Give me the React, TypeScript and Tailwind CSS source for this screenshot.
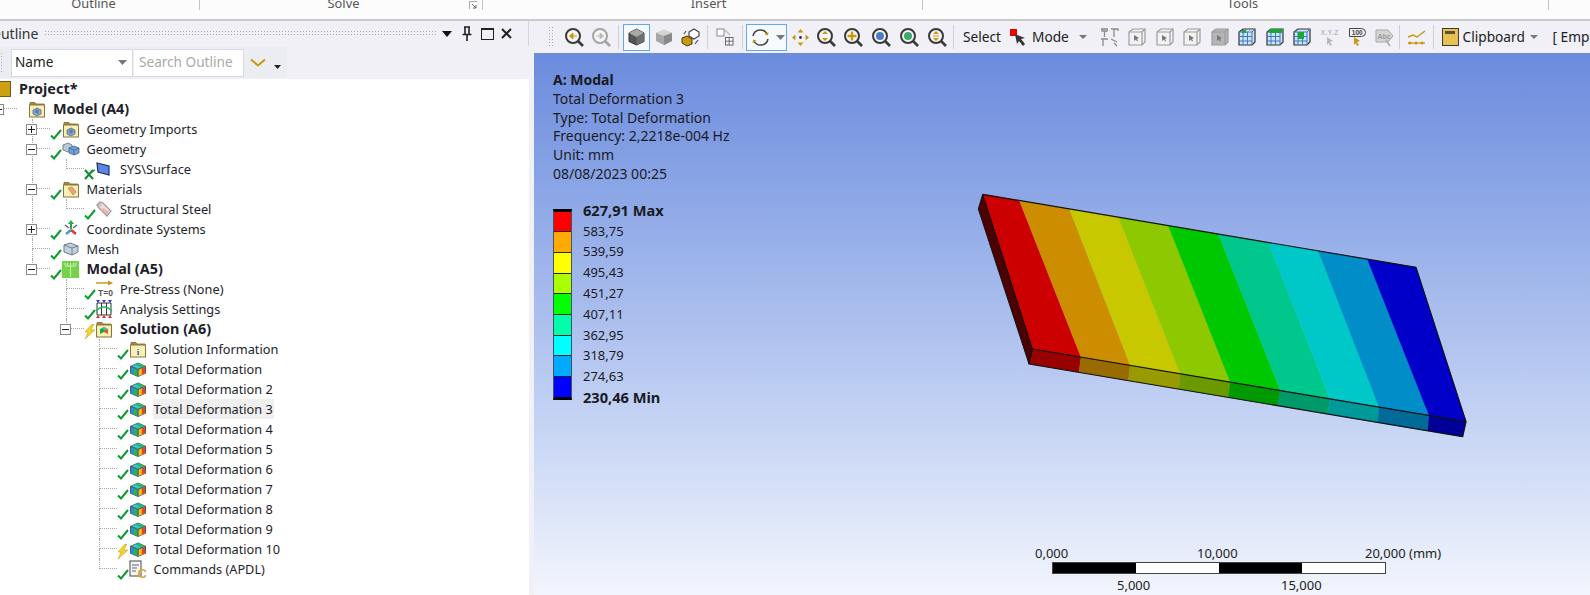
import React from "react";

type Check = "ok" | "bolt" | "x" | null;

type TreeRow = {
  guides: boolean[];
  conn: "T" | "L";
  exp?: "+" | "-";
  check: Check;
  icon: React.ReactNode;
  label: string;
  bold?: boolean;
  selected?: boolean;
};

function Folder({ children }: { children?: React.ReactNode }) {
  return (
    <svg width="18" height="18" viewBox="0 0 18 18">
      <path d="M2 4V2.5h5l1 1.5h8v1.5H2z" fill="#a98a3c" stroke="#7d6a30" strokeWidth="0.8" />
      <rect x="1.5" y="5" width="15" height="12" fill="#fbf0b4" stroke="#85763e" strokeWidth="1" />
      {children}
    </svg>
  );
}

function Camera() {
  return (
    <>
      <path d="M5 10l4-2 4 2v4l-4 2-4-2z" fill="#8fa6bf" stroke="#5b6d80" strokeWidth="0.8" />
      <circle cx="9" cy="11.5" r="2" fill="#4f82c4" />
    </>
  );
}

function MaterialsIcon() {
  return (
    <Folder>
      <path d="M6 8l4-1 4 5-3 3z" fill="#e0a777" stroke="#b57f50" strokeWidth="0.7" />
    </Folder>
  );
}

function SolutionFolder() {
  return (
    <Folder>
      <path d="M5 9l4-2v5l-4 2z" fill="#1faa3c" />
      <path d="M9 7l4 2v5l-4-2z" fill="#e2562b" />
      <path d="M7 8.5l3-1 3 2-3 1z" fill="#38bcd8" />
    </Folder>
  );
}

function InfoFolder() {
  return (
    <Folder>
      <text x="9" y="15" textAnchor="middle" fontSize="9" fontWeight="700" fill="#2560c8" fontFamily="Liberation Serif, serif">
        i
      </text>
    </Folder>
  );
}

function GeometryIcon() {
  return (
    <svg width="18" height="14" viewBox="0 0 18 14">
      <path d="M1 3l5-2 4 2v5l-4 2-5-2z" fill="#b8c8dc" stroke="#6d7a88" strokeWidth="0.9" />
      <path d="M7 6l5-2 5 2v5l-5 2-5-2z" fill="#6fa0dc" stroke="#566f8c" strokeWidth="0.9" />
      <path d="M7 6l5 2 5-2M12 8v5" fill="none" stroke="#3f5f88" strokeWidth="0.7" />
    </svg>
  );
}

function SurfaceIcon() {
  return (
    <svg width="16" height="14" viewBox="0 0 16 14">
      <path d="M2 1l12 3v9L3 10z" fill="#5b86e8" stroke="#1f2f5f" strokeWidth="1.2" />
    </svg>
  );
}

function TagIcon() {
  return (
    <svg width="18" height="18" viewBox="0 0 18 18">
      <path d="M2 5l3-3 3 1 8 8-4 5-8-8z" fill="#f0dcdc" stroke="#9a9a9a" strokeWidth="1.2" />
      <path d="M8 8l6 4-2 3-6-5z" fill="#e8b4b4" />
      <circle cx="5" cy="5" r="1.2" fill="#fff" stroke="#888" strokeWidth="0.6" />
    </svg>
  );
}

function CoordIcon() {
  return (
    <svg width="18" height="18" viewBox="0 0 18 18">
      <path d="M9 9V3" stroke="#18b040" strokeWidth="2" />
      <path d="M9 0l3 4H6z" fill="#18b040" />
      <path d="M9 10L4 14" stroke="#4a90e0" strokeWidth="2.4" />
      <path d="M9 10l5 4" stroke="#e03030" strokeWidth="2.4" />
      <path d="M3 5l4 3M15 5l-4 3" stroke="#555" strokeWidth="1.2" />
    </svg>
  );
}

function MeshIcon() {
  return (
    <svg width="18" height="14" viewBox="0 0 18 14">
      <path d="M2 3l6-2 8 3v6l-6 3-8-3z" fill="#c2d0e0" stroke="#6d7a88" strokeWidth="1" />
      <path d="M2 3l8 3 6-2M10 6v7" fill="none" stroke="#6d7a88" strokeWidth="0.9" />
    </svg>
  );
}

function ModalIcon() {
  return (
    <svg width="17" height="17" viewBox="0 0 17 17">
      <rect width="17" height="17" fill="#74d34a" />
      <path d="M8.5 16V5M3 5h11M3 2v2M5.5 2v2M8.5 2v2M11.5 2v2M14 2v2" stroke="#d8f6c8" strokeWidth="1" fill="none" />
    </svg>
  );
}

function PreStressIcon() {
  return (
    <svg width="18" height="18" viewBox="0 0 18 18">
      <path d="M1 3h13" stroke="#c8960c" strokeWidth="1.4" />
      <path d="M13 0.5l5 2.5-5 2.5z" fill="#c8960c" />
      <text x="18" y="16" textAnchor="end" fontSize="8.5" fontWeight="700" fill="#555" fontFamily="Liberation Sans, sans-serif">
        T=0
      </text>
    </svg>
  );
}

function AnalysisIcon() {
  return (
    <svg width="18" height="18" viewBox="0 0 18 18">
      <path d="M2 3h14v12H2zM6.5 3v12M11.5 3v12" fill="none" stroke="#333" strokeWidth="1" />
      <path d="M1 11q8-8 16 0" fill="none" stroke="#22b85a" strokeWidth="1.5" />
      <path d="M1 0h4L3 3zM7 0h4L9 3zM13 0h4l-2 3z" fill="#2a3fe0" />
      <path d="M3 15l2 3H1zM9 15l2 3H7zM15 15l2 3h-4z" fill="#e03030" />
    </svg>
  );
}

function TotalDefIcon() {
  return (
    <svg width="18" height="15" viewBox="0 0 18 15">
      <path d="M1 4l8-3.5L17 4v7.5L9 15l-8-3.5z" fill="#5a5a5a" />
      <path d="M2 5l6.3 2.7V14L2 11.2z" fill="#2290e0" />
      <path d="M5 6.3l3.3 1.4V14L5 12.5z" fill="#25b848" />
      <path d="M9.7 7.7L16 5v6.2L9.7 14z" fill="#ecc420" />
      <path d="M12.8 6.4L16 5v6.2l-3.2 1.4z" fill="#e4481f" />
      <path d="M2.5 4L9 1.2 15.5 4 9 6.8z" fill="#2fc8dc" />
      <path d="M9 1.2L15.5 4 12 5.5 6 2.5z" fill="#25b868" />
    </svg>
  );
}

function CommandsIcon() {
  return (
    <svg width="18" height="18" viewBox="0 0 18 18">
      <rect x="1" y="1" width="11" height="15" fill="#f4f4f4" stroke="#666" strokeWidth="1.2" />
      <path d="M3 5h7M3 8h5M3 11h4" stroke="#666" strokeWidth="1" />
      <text x="18" y="18" textAnchor="end" fontSize="13" fontWeight="700" fill="#d9a63a" fontFamily="Liberation Sans, sans-serif">
        C
      </text>
    </svg>
  );
}

function Status({ kind }: { kind: Check }) {
  if (kind === "ok") {
    return (
      <svg width="12" height="11" viewBox="0 0 12 11" className="mt-[10px]">
        <path d="M1 6.5l3 3L11 1" fill="none" stroke="#0d9a2e" strokeWidth="2" />
      </svg>
    );
  }
  if (kind === "bolt") {
    return (
      <svg width="12" height="15" viewBox="0 0 12 15" className="mt-[5px]">
        <path d="M8 0L1 8h3l-3 7 10-9H7l3-6z" fill="#f5d327" stroke="#b39a20" strokeWidth="0.5" />
      </svg>
    );
  }
  if (kind === "x") {
    return (
      <svg width="12" height="11" viewBox="0 0 12 11" className="mt-[10px]">
        <path d="M1 1l8 9M9 1l-8 9" fill="none" stroke="#0d8a2e" strokeWidth="2" />
        <path d="M7 4l2-2 2-1" fill="none" stroke="#0d9a2e" strokeWidth="1.4" />
      </svg>
    );
  }
  return null;
}

function Expander({ sign }: { sign: "+" | "-" }) {
  return (
    <div className="absolute left-[-6px] top-[5px] flex h-[11px] w-[11px] items-center justify-center border border-[#8a8a8a] bg-white">
      <div className="relative h-px w-[7px] bg-[#222]">
        {sign === "+" && <div className="absolute left-[3px] top-[-3px] h-[7px] w-px bg-[#222]" />}
      </div>
    </div>
  );
}

const line = "border-l border-dotted border-[#a8a8a8]";

function Row({ row }: { row: TreeRow }) {
  return (
    <div className="-ml-[1.5px] flex h-5">
      {row.guides.map((on, i) => (
        <div key={i} className={`h-5 w-[33.5px] shrink-0 ${on ? line : ""}`} />
      ))}
      <div className="relative h-5 w-[18px] shrink-0">
        <div className={`h-[10px] ${line} border-b`} />
        {row.conn === "T" && <div className={`h-[10px] ${line}`} />}
        {row.exp && <Expander sign={row.exp} />}
      </div>
      <div className="h-5 w-[11.5px] shrink-0">
        <Status kind={row.check} />
      </div>
      <div className="flex h-5 w-[24px] shrink-0 items-center">{row.icon}</div>
      <div
        className={`h-5 px-px leading-5 ${row.bold ? "text-[14.4px] font-bold" : ""} ${row.selected ? "bg-[#efefef]" : ""}`}
      >
        {row.label}
      </div>
    </div>
  );
}

const V = true;
const _ = false;

const rows: TreeRow[] = [
  { guides: [], conn: "T", exp: "-", check: null, icon: <Folder><Camera /></Folder>, label: "Model (A4)", bold: true },
  { guides: [_], conn: "T", exp: "+", check: "ok", icon: <Folder><Camera /></Folder>, label: "Geometry Imports" },
  { guides: [_], conn: "T", exp: "-", check: "ok", icon: <GeometryIcon />, label: "Geometry" },
  { guides: [_, V], conn: "L", check: "x", icon: <SurfaceIcon />, label: "SYS\\Surface" },
  { guides: [_], conn: "T", exp: "-", check: "ok", icon: <MaterialsIcon />, label: "Materials" },
  { guides: [_, V], conn: "L", check: "ok", icon: <TagIcon />, label: "Structural Steel" },
  { guides: [_], conn: "T", exp: "+", check: "ok", icon: <CoordIcon />, label: "Coordinate Systems" },
  { guides: [_], conn: "T", check: "ok", icon: <MeshIcon />, label: "Mesh" },
  { guides: [_], conn: "L", exp: "-", check: "ok", icon: <ModalIcon />, label: "Modal (A5)", bold: true },
  { guides: [_, _], conn: "T", check: "ok", icon: <PreStressIcon />, label: "Pre-Stress (None)" },
  { guides: [_, _], conn: "T", check: "ok", icon: <AnalysisIcon />, label: "Analysis Settings" },
  { guides: [_, _], conn: "L", exp: "-", check: "bolt", icon: <SolutionFolder />, label: "Solution (A6)", bold: true },
  { guides: [_, _, _], conn: "T", check: "ok", icon: <InfoFolder />, label: "Solution Information" },
  { guides: [_, _, _], conn: "T", check: "ok", icon: <TotalDefIcon />, label: "Total Deformation" },
  { guides: [_, _, _], conn: "T", check: "ok", icon: <TotalDefIcon />, label: "Total Deformation 2" },
  { guides: [_, _, _], conn: "T", check: "ok", icon: <TotalDefIcon />, label: "Total Deformation 3", selected: true },
  { guides: [_, _, _], conn: "T", check: "ok", icon: <TotalDefIcon />, label: "Total Deformation 4" },
  { guides: [_, _, _], conn: "T", check: "ok", icon: <TotalDefIcon />, label: "Total Deformation 5" },
  { guides: [_, _, _], conn: "T", check: "ok", icon: <TotalDefIcon />, label: "Total Deformation 6" },
  { guides: [_, _, _], conn: "T", check: "ok", icon: <TotalDefIcon />, label: "Total Deformation 7" },
  { guides: [_, _, _], conn: "T", check: "ok", icon: <TotalDefIcon />, label: "Total Deformation 8" },
  { guides: [_, _, _], conn: "T", check: "ok", icon: <TotalDefIcon />, label: "Total Deformation 9" },
  { guides: [_, _, _], conn: "T", check: "bolt", icon: <TotalDefIcon />, label: "Total Deformation 10" },
  { guides: [_, _, _], conn: "L", check: "ok", icon: <CommandsIcon />, label: "Commands (APDL)" },
];

function Ribbon() {
  const cell = "h-[10px] border-r border-[#c4c4c4] text-center";
  return (
    <div className="flex h-[19px] shrink-0 overflow-hidden border-b border-[#fafafa] bg-[#fcfcfc] text-[12.8px] leading-[14px] text-[#555]">
      <div className={`${cell} w-[200px] pr-[12px]`}>
        <div className="-mt-[4px]">Outline</div>
      </div>
      <div className={`${cell} relative w-[283px] pl-[5px]`}>
        <div className="-mt-[4px]">Solve</div>
        <svg width="9" height="9" viewBox="0 0 9 9" className="absolute right-[4px] top-[1px]">
          <path d="M0.5 8V0.5H8" fill="none" stroke="#aaa" />
          <path d="M3 3l4 4M7 4v3H4" fill="none" stroke="#666" />
        </svg>
      </div>
      <div className={`${cell} w-[440px] pl-[12px]`}>
        <div className="-mt-[4px]">Insert</div>
      </div>
      <div className={`${cell} w-[626px] pl-[14px]`}>
        <div className="-mt-[4px]">Tools</div>
      </div>
    </div>
  );
}

function OutlineHeader() {
  return (
    <div className="flex h-[25px] w-[529px] shrink-0 items-center border-r border-[#d4d4dc] text-[14px] text-[#333]">
      <div className="-ml-[10px] w-[54px] shrink-0">Outline</div>
      <div className="h-[7px] w-[393px] shrink-0 bg-[radial-gradient(#a6a6b0_0.7px,transparent_0.9px)] bg-[length:3px_3px]" />
      <svg width="10" height="6" viewBox="0 0 10 6" className="ml-[5px] shrink-0">
        <path d="M0 0h10L5 6z" fill="#111" />
      </svg>
      <svg width="12" height="15" viewBox="0 0 12 15" className="ml-[9px] shrink-0">
        <path d="M3 1h6M4 1v7M8 1v7M1.5 8.5h9M6 9v6" fill="none" stroke="#222" strokeWidth="1.6" />
      </svg>
      <div className="ml-[8px] h-[12px] w-[13px] shrink-0 border-[1.5px] border-t-[2.5px] border-[#222]" />
      <svg width="11" height="11" viewBox="0 0 11 11" className="ml-[7px] shrink-0">
        <path d="M1 1l9 9M10 1l-9 9" stroke="#222" strokeWidth="2" />
      </svg>
    </div>
  );
}

function OutlineFilter() {
  return (
    <div className="flex h-[33px] w-[529px] shrink-0 items-center text-[13.6px]">
      <div className="flex h-[31px] w-[287px] items-center bg-[#ecedf3]">
        <div className="h-[22px] w-[3px] bg-[radial-gradient(#b0b0b8_0.7px,transparent_0.9px)] bg-[length:3px_3px]" />
        <div className="ml-[8px] flex h-[28px] w-[122px] items-center justify-between border border-[#d8d8e6] bg-white pl-[3px] pr-[5px] text-[#222]">
          Name
          <svg width="9" height="5" viewBox="0 0 9 5">
            <path d="M0 0h9L4.5 5z" fill="#777" />
          </svg>
        </div>
        <div className="ml-px flex h-[28px] w-[110px] items-center border border-l-0 border-[#d8d8e6] bg-white pl-[5px] whitespace-nowrap text-[#a9a9a9]">
          Search Outline
        </div>
        <svg width="16" height="10" viewBox="0 0 16 10" className="ml-[6px]">
          <path d="M1 1.5l7 6 7-6" fill="none" stroke="#c8980f" strokeWidth="2" />
        </svg>
        <svg width="7" height="4" viewBox="0 0 7 4" className="ml-[8px] mt-[9px]">
          <path d="M0 0h7L3.5 4z" fill="#222" />
        </svg>
      </div>
    </div>
  );
}

function OutlineTree() {
  return (
    <div className="min-h-0 w-[529px] flex-1 overflow-hidden bg-white text-[12.75px] text-[#1e1e2a]">
      <div className="flex h-5 items-center">
        <div className="h-[16px] w-[11px] border border-l-0 border-[#6e5a1e] bg-[#cf9f12]" />
        <div className="ml-[8px] text-[14.4px] font-bold">Project*</div>
      </div>
      {rows.map((r) => (
        <Row key={r.label} row={r} />
      ))}
    </div>
  );
}

function Mag({ children, gray }: { children?: React.ReactNode; gray?: boolean }) {
  const c = gray ? "#a4a4a4" : "#3a3a3a";
  return (
    <svg width="22" height="22" viewBox="0 0 22 22">
      <circle cx="10" cy="10" r="7" fill="#f5f5f5" stroke={c} strokeWidth="2" />
      <path d="M15 15l5 5" stroke={c} strokeWidth="2.6" />
      {children}
    </svg>
  );
}

function Slot({ w = "w-[27.5px]", children }: { w?: string; children: React.ReactNode }) {
  return <div className={`flex h-[28px] shrink-0 items-center justify-center ${w}`}>{children}</div>;
}

function Sep({ ml = "ml-[3px]" }: { ml?: string }) {
  return <div className={`h-[24px] w-px shrink-0 bg-[#cfcfd6] ${ml}`} />;
}

function UpDown() {
  return <path d="M10 5l3 3H7zM10 15l-3-3h6z" fill="#c8980f" />;
}

function GrayBox({ dark }: { dark?: boolean }) {
  return (
    <svg width="18" height="18" viewBox="0 0 18 18">
      <path d="M1 4l4-3h12v13l-3 3H1z" fill={dark ? "#b5b5b5" : "#f2f2f2"} stroke="#9c9c9c" strokeWidth="1.2" />
      <path d="M1 4h13v13M14 4l3-3" fill="none" stroke="#9c9c9c" strokeWidth="1.2" />
      <path d="M6 7l5 3-2 1 1 2-1 .5-1-2-2 1.5z" fill="#777" />
    </svg>
  );
}

function GridBox({ green }: { green: string }) {
  return (
    <svg width="18" height="18" viewBox="0 0 18 18">
      <path d="M1 4l4-3h12v13l-3 3H1z" fill="#cfe2f8" stroke="#333" strokeWidth="1.2" />
      <path d="M1 4h13v13M14 4l3-3M5 4v13M9.5 4v13M1 8.5h13M1 13h13" fill="none" stroke="#3a78c8" strokeWidth="1" />
      <path d={green} fill="#18a838" />
    </svg>
  );
}

function Toolbar() {
  return (
    <div className="flex h-[32px] w-[1056px] shrink-0 items-center overflow-hidden bg-[#f0f0f6] text-[13.7px] text-[#222]">
      <div className="ml-[14px] h-[22px] w-[6px] shrink-0 bg-[radial-gradient(#a6a6b0_0.7px,transparent_0.9px)] bg-[length:3px_3px]" />
      <div className="ml-[6px] flex">
        <Slot>
          <Mag>
            <path d="M14 10H8M10 7l-3.5 3 3.5 3z" fill="#c8980f" stroke="#c8980f" />
          </Mag>
        </Slot>
        <Slot>
          <Mag gray>
            <path d="M6 10h6M10 7l3.5 3-3.5 3z" fill="#b8b8b8" stroke="#b8b8b8" />
          </Mag>
        </Slot>
      </div>
      <Sep />
      <div className="ml-[4px] flex h-[27px] w-[27px] shrink-0 items-center justify-center border-[1.5px] border-[#62a8ee] bg-[#f6f9fe]">
        <svg width="17" height="18" viewBox="0 0 17 18">
          <path d="M8.5 1L16 5v8.5L8.5 17 1 13.5V5z" fill="#555" stroke="#333" />
          <path d="M8.5 1L16 5 8.5 9 1 5z" fill="#a9a9a9" />
          <path d="M8.5 9L16 5v8.5L8.5 17z" fill="#6e6e6e" />
        </svg>
      </div>
      <Slot w="w-[27px]">
        <svg width="16" height="15" viewBox="0 0 16 15">
          <path d="M8 0l8 3v8l-8 4-8-4V3z" fill="#a6a6a6" />
          <path d="M8 0l8 3-8 3-8-3z" fill="#d4d4d4" />
          <path d="M8 6l8-3v8l-8 4z" fill="#8a8a8a" />
        </svg>
      </Slot>
      <Slot w="w-[27px]">
        <svg width="19" height="19" viewBox="0 0 19 19">
          <path d="M1 10l5-2 5 3v5l-5 2-5-3z" fill="#c8980f" stroke="#4a3a10" strokeWidth="1" />
          <path d="M8 4l5-3 5 3v4l-5 3-5-3z" fill="#fff" stroke="#444" strokeWidth="1.2" />
          <path d="M3 6l2-3M17 12l-3 4" stroke="#555" strokeWidth="1.2" />
        </svg>
      </Slot>
      <Sep />
      <div className="ml-[3px]">
        <Slot w="w-[28px]">
          <svg width="18" height="18" viewBox="0 0 18 18">
            <rect x="1" y="1" width="7" height="7" fill="#fff" stroke="#888" />
            <rect x="9.5" y="9.5" width="7.5" height="7.5" fill="#fff" stroke="#666" />
            <path d="M13.2 9.5v7.5M9.5 13.2H17" stroke="#666" />
            <path d="M9 2l5 5" stroke="#bbb" strokeWidth="1.4" />
          </svg>
        </Slot>
      </div>
      <Sep />
      <div className="ml-[3px] flex h-[27px] w-[41px] shrink-0 items-center border-[1.5px] border-[#62a8ee] bg-[#f6f9fe] pl-[4px]">
        <svg width="19" height="19" viewBox="0 0 19 19">
          <path d="M2 8a7.5 7.5 0 0 1 14-2" fill="none" stroke="#444" strokeWidth="1.5" />
          <path d="M17 11a7.5 7.5 0 0 1-14 2" fill="none" stroke="#444" strokeWidth="1.5" />
          <path d="M13.5 6.5l3.5 1 .5-3.5zM5.5 12.5l-3.5-1-.5 3.5z" fill="#c8980f" />
        </svg>
        <svg width="9" height="5" viewBox="0 0 9 5" className="ml-[6px]">
          <path d="M0 0h9L4.5 5z" fill="#777" />
        </svg>
      </div>
      <Slot w="w-[26px]">
        <svg width="17" height="17" viewBox="0 0 17 17">
          <path d="M8.5 0l3 3.5h-6zM8.5 17l-3-3.5h6zM0 8.5l3.5-3v6zM17 8.5l-3.5 3v-6z" fill="#c8980f" />
          <circle cx="8.5" cy="8.5" r="1.4" fill="#333" />
        </svg>
      </Slot>
      <Slot w="w-[26px]">
        <Mag>
          <UpDown />
        </Mag>
      </Slot>
      <Slot w="w-[28px]">
        <Mag>
          <path d="M10 5.5v9M5.5 10h9" stroke="#c8980f" strokeWidth="2.4" />
        </Mag>
      </Slot>
      <Slot w="w-[28px]">
        <Mag>
          <circle cx="10" cy="10" r="4" fill="#4a7fc4" />
        </Mag>
      </Slot>
      <Slot w="w-[28px]">
        <Mag>
          <circle cx="10" cy="10" r="4" fill="#4aa07a" />
          <circle cx="9" cy="11" r="2" fill="#18c838" />
        </Mag>
      </Slot>
      <Slot w="w-[27px]">
        <Mag>
          <UpDown />
          <path d="M7 10h6" stroke="#c8980f" />
        </Mag>
      </Slot>
      <Sep />
      <div className="ml-[9px] w-[47px] shrink-0">Select</div>
      <svg width="17" height="17" viewBox="0 0 17 17" className="shrink-0">
        <rect x="0" y="0" width="7" height="7" fill="#f00000" />
        <path d="M5 5l10 4-4 1 4 5-2 2-4-5-2 3z" fill="#333" />
      </svg>
      <div className="ml-[5px] w-[44px] shrink-0">Mode</div>
      <svg width="8" height="4" viewBox="0 0 8 4" className="ml-[3px] shrink-0">
        <path d="M0 0h8L4 4z" fill="#777" />
      </svg>
      <div className="ml-[9px] flex">
        <Slot>
          <svg width="19" height="19" viewBox="0 0 19 19">
            <path d="M1 1h7M2 1v2h5V1M4.5 3v6M11 1h7v2M14 1v8M1 11h7M3 11v7M11 11l6 3M14 15l3 3" fill="none" stroke="#8a8a8a" strokeWidth="1.3" />
          </svg>
        </Slot>
        <Slot>
          <GrayBox />
        </Slot>
        <Slot>
          <GrayBox />
        </Slot>
        <Slot>
          <GrayBox />
        </Slot>
        <Slot>
          <GrayBox dark />
        </Slot>
        <Slot>
          <GridBox green="M4 2h4v3H4z" />
        </Slot>
        <Slot>
          <GridBox green="M3 1h13v4H3z" />
        </Slot>
        <Slot>
          <GridBox green="M5 4h6v7H5z" />
        </Slot>
        <Slot>
          <div className="flex flex-col items-center">
            <div className="font-['Liberation_Sans',sans-serif] text-[6.5px] font-bold leading-[8px] tracking-[0.5px] text-[#b8b8b8]">
              X.Y.Z
            </div>
            <svg width="8" height="9" viewBox="0 0 8 9">
              <path d="M1 0l6 4-3 1 2 3-2 1-1-3-2 2z" fill="#b8b8b8" />
            </svg>
          </div>
        </Slot>
        <Slot>
          <div className="flex flex-col items-center">
            <div className="rounded-r-[6px] border border-[#444] px-[2px] font-['Liberation_Sans',sans-serif] text-[6.5px] font-bold leading-[7px] text-[#444]">
              100
            </div>
            <svg width="8" height="9" viewBox="0 0 8 9">
              <path d="M1 0l6 4-3 1 2 3-2 1-1-3-2 2z" fill="#c8980f" />
            </svg>
          </div>
        </Slot>
        <Slot>
          <svg width="19" height="19" viewBox="0 0 19 19">
            <path d="M1 2h12l5 6-5 6H1z" fill="#d4d4d4" stroke="#a8a8a8" />
            <text x="2.5" y="11" fontSize="7" fontWeight="700" fill="#999" fontFamily="Liberation Sans, sans-serif">
              Abc
            </text>
            <path d="M11 12l4 6" stroke="#aaa" strokeWidth="1.6" />
          </svg>
        </Slot>
      </div>
      <Sep ml="ml-0" />
      <Slot w="w-[33px]">
        <svg width="19" height="16" viewBox="0 0 19 16">
          <path d="M1 8l5-2 4 2 8-6" fill="none" stroke="#c8980f" strokeWidth="1.4" />
          <path d="M1 14h17" stroke="#c8980f" strokeWidth="1.2" />
          <circle cx="3" cy="14" r="1.6" fill="#c8980f" />
          <circle cx="9" cy="14" r="1.6" fill="#c8980f" />
          <circle cx="15" cy="14" r="1.6" fill="#c8980f" />
        </svg>
      </Slot>
      <Sep ml="ml-0" />
      <div className="ml-[8px] flex h-[18px] w-[17px] shrink-0 justify-center border border-[#3a3a3a] bg-[#e8c250]">
        <div className="mt-[2px] h-[3px] w-[10px] bg-[#5a5230]" />
      </div>
      <div className="ml-[4px] w-[64px] shrink-0">Clipboard</div>
      <svg width="8" height="4" viewBox="0 0 8 4" className="ml-[3px] shrink-0">
        <path d="M0 0h8L4 4z" fill="#777" />
      </svg>
      <div className="ml-[15px] shrink-0 whitespace-nowrap">[ Emp</div>
    </div>
  );
}

const legend = [
  "bg-[#ff0000]",
  "bg-[#ffaa00]",
  "bg-[#ffff00]",
  "bg-[#aaff00]",
  "bg-[#00ff00]",
  "bg-[#00ffaa]",
  "bg-[#00ffff]",
  "bg-[#00aaff]",
  "bg-[#0000ff]",
];

const legendLabels = ["583,75", "539,59", "495,43", "451,27", "407,11", "362,95", "318,79", "274,63"];

function Legend() {
  return (
    <div className="mt-[16px] flex">
      <div className="mt-[9px] flex h-[191px] w-[19px] flex-col border border-[#45506a] border-t-[3px] border-t-black border-b-[3px] border-b-black">
        {legend.map((c) => (
          <div key={c} className={`flex-1 border-b border-[#222] last:border-b-0 ${c}`} />
        ))}
      </div>
      <div className="ml-[11px] text-[13px] leading-[20.8px]">
        <div className="text-[14.6px] font-bold">627,91 Max</div>
        {legendLabels.map((v) => (
          <div key={v}>{v}</div>
        ))}
        <div className="text-[14.6px] font-bold">230,46 Min</div>
      </div>
    </div>
  );
}

const topEdge = [[68, 43], [178, 61.5], [328, 86.8], [476, 111.7], [625, 136.8], [775, 162.1], [925, 187.4], [1075, 212.6], [1222, 237.4], [1368, 262]];
const midEdge = [[217, 507], [363, 531.5], [511, 556.3], [661, 581.4], [811, 606.5], [961, 631.7], [1110, 656.6], [1257, 681.2], [1407, 706.4], [1518, 725]];
const botEdge = [[207, 552], [357, 577.1], [505, 601.9], [657, 627.4], [805, 652.2], [953, 677], [1103, 702.1], [1253, 727.3], [1403, 752.4], [1508, 770]];
const topColors = ["#cc0000", "#cc8d00", "#c8c800", "#8dc800", "#00c800", "#00c88d", "#00c8c8", "#008dc8", "#0000c8"];
const sideColors = ["#990000", "#996a00", "#999900", "#6a9900", "#009900", "#00996a", "#009999", "#006a99", "#000099"];

function Plate() {
  return (
    <svg
      width="510"
      height="270"
      viewBox="0 0 1530 810"
      className="absolute left-[426px] top-[127px]"
    >
      <path d="M68 43L55 87 207 552 217 507z" fill="#4d0000" stroke="#111" strokeWidth="3" strokeLinejoin="round" />
      {topColors.map((c, i) => (
        <polygon
          key={c}
          points={`${topEdge[i]} ${topEdge[i + 1]} ${midEdge[i + 1]} ${midEdge[i]}`}
          fill={c}
          stroke={c}
          strokeWidth="1"
        />
      ))}
      {sideColors.map((c, i) => (
        <polygon
          key={c}
          points={`${midEdge[i]} ${midEdge[i + 1]} ${botEdge[i + 1]} ${botEdge[i]}`}
          fill={c}
          stroke={c}
          strokeWidth="1"
        />
      ))}
      <path
        d="M68 43L1368 262 1518 725 1508 770 207 552 217 507 68 43M217 507L1518 725"
        fill="none"
        stroke="#111"
        strokeWidth="3.5"
        strokeLinejoin="round"
      />
    </svg>
  );
}

function ScaleBar() {
  return (
    <div className="absolute left-[480px] top-[492px] w-[440px] whitespace-nowrap text-[13px] leading-[16px] text-[#222]">
      <div className="relative h-[17px]">
        <span className="absolute left-[21px]">0,000</span>
        <span className="absolute left-[183px]">10,000</span>
        <span className="absolute left-[351px]">20,000 (mm)</span>
      </div>
      <div className="ml-[38px] flex h-[12px] w-[334px] border border-[#444]">
        <div className="flex-1 bg-black" />
        <div className="flex-1 bg-white" />
        <div className="flex-1 bg-black" />
        <div className="flex-1 bg-white" />
      </div>
      <div className="relative mt-[3px] h-[16px]">
        <span className="absolute left-[103px]">5,000</span>
        <span className="absolute left-[267px]">15,000</span>
      </div>
    </div>
  );
}

function Viewport() {
  return (
    <div className="relative flex-1 overflow-hidden bg-linear-to-b from-[#6b8bdd] to-[#f2f5fc] pl-[19px] pt-[18px] text-[14px] text-[#1a1a24]">
      <div className="leading-[18.8px]">
        <div className="font-bold">A: Modal</div>
        <div>Total Deformation 3</div>
        <div>Type: Total Deformation</div>
        <div>Frequency: 2,2218e-004 Hz</div>
        <div>Unit: mm</div>
        <div>08/08/2023 00:25</div>
      </div>
      <Legend />
      <Plate />
      <ScaleBar />
    </div>
  );
}

export default function App() {
  return (
    <div className="flex h-[595px] w-[1590px] flex-col overflow-hidden bg-[#f0f0f6] font-['Noto_Sans',sans-serif]">
      <Ribbon />
      <div className="h-[2px] shrink-0 bg-[#c9c9d0]" />
      <div className="flex min-h-0 flex-1">
        <div className="flex w-[534px] shrink-0 flex-col">
          <OutlineHeader />
          <OutlineFilter />
          <OutlineTree />
        </div>
        <div className="flex min-w-0 flex-1 flex-col">
          <Toolbar />
          <Viewport />
        </div>
      </div>
    </div>
  );
}
